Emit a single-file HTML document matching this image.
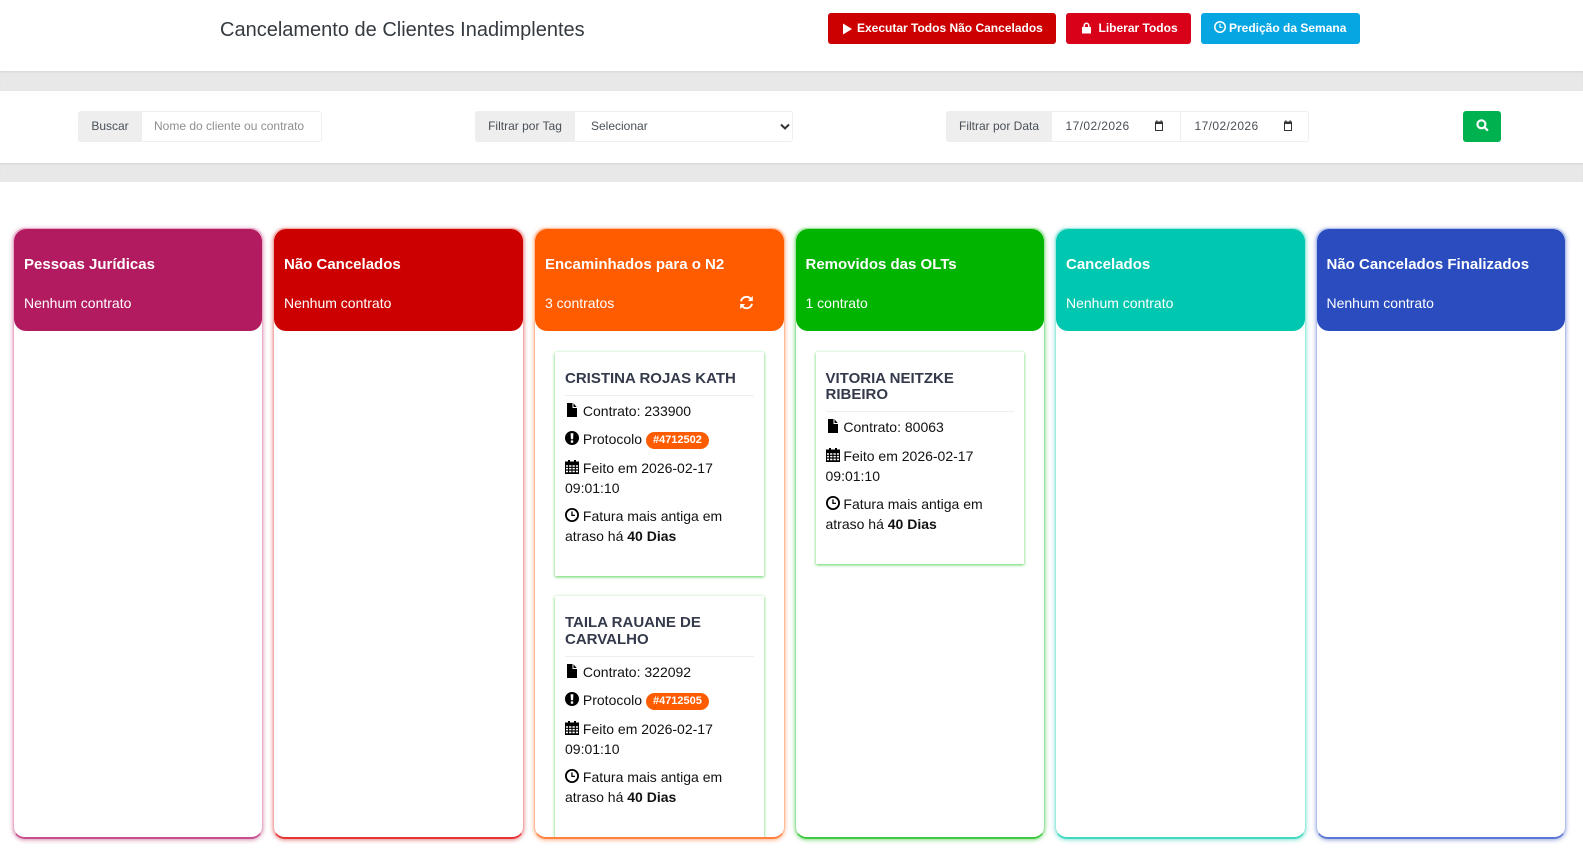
<!DOCTYPE html>
<html lang="pt-BR"><head><meta charset="utf-8"><title>Cancelamento de Clientes Inadimplentes</title>
<style>
*{box-sizing:border-box}
html,body{margin:0;padding:0;width:1583px;height:862px;overflow:hidden;background:#fff;font-family:"Liberation Sans",sans-serif;color:#000}
.abs,.btn,.band,.col,.head,.card,.grp{position:absolute}
.band{left:0;width:1583px;height:20px;background:#e8e8e8;box-shadow:inset 0 2px 2px -1px #d4d4da}
h1{position:absolute;margin:0;left:220px;top:18px;font-size:20px;line-height:24px;font-weight:400;color:#343a40;white-space:nowrap}
.btn{top:13px;height:31px;border-radius:3px;color:#fff;font-weight:700;font-size:12px;line-height:30px;white-space:nowrap}
.btn svg{position:absolute;fill:#fff}
.grp{top:111px;height:31px;border:1px solid #eee;border-radius:3px;font-size:12px;line-height:29px;color:#495057;background:#fff;white-space:nowrap}
.lab{position:absolute;left:-1px;top:-1px;height:31px;line-height:30px;background:#eee;border-radius:3px 0 0 3px;text-align:center;color:#495057}
.t{position:absolute;top:0}
.col{top:228px;width:250.5px;height:611px;background:#fff;border-radius:12px;border:1px solid}
.head{top:229px;width:248.5px;height:102px;border-radius:12px;color:#fff}
.head b{position:absolute;left:10px;top:26.5px;font-size:15px;line-height:18px;white-space:nowrap}
.head span{position:absolute;left:10px;top:66px;font-size:14px;line-height:16px;white-space:nowrap}
.clip{position:absolute;left:535px;top:331px;width:248.5px;height:506px;overflow:hidden}
.card{background:#fff;box-shadow:0 1px 3px rgba(50,200,50,.8);padding:0 10px;overflow:hidden}
.card h5{margin:0;padding:18px 0 0;font-size:15px;line-height:17px;font-weight:700;color:#343a4b}
.card hr{border:0;border-top:1px solid #eee;margin:7.5px 0 0}
.card p{margin:0;position:absolute;left:10px;width:189px;font-size:14px;line-height:20px;color:#111}
.card svg{width:14px;height:14px;vertical-align:-1px;fill:#000}
.tag{display:inline-block;background:#ff5c00;color:#fff;font-size:11px;font-weight:700;border-radius:9px;height:17px;line-height:17px;padding:0;vertical-align:1px;margin-left:0;width:63px;text-align:center}
</style></head><body>
<svg width="0" height="0" style="position:absolute"><defs>
<symbol id="file" viewBox="0 0 14 14"><path d="M2 0H7.5V5H12V14H2ZM8.5 0.3L11.7 4H8.5Z"/></symbol>
<symbol id="exc" viewBox="0 0 14 14"><path fill-rule="evenodd" d="M7 0a7 7 0 1 0 0 14A7 7 0 0 0 7 0ZM5.6 2.3H8.4L8.1 8.3H5.9ZM5.8 9.4H8.2V11.8H5.8Z"/></symbol>
<symbol id="cal" viewBox="0 0 14 14"><path fill-rule="evenodd" d="M3 0H5V1.5H9V0H11V1.5H14V14H0V1.5H3ZM1 5.2V6.7H3V5.2ZM4.1 5.2V6.7H6.4V5.2ZM7.5 5.2V6.7H9.8V5.2ZM10.9 5.2V6.7H13V5.2ZM1 7.9V9.4H3V7.9ZM4.1 7.9V9.4H6.4V7.9ZM7.5 7.9V9.4H9.8V7.9ZM10.9 7.9V9.4H13V7.9ZM1 10.6V12.2H3V10.6ZM4.1 10.6V12.2H6.4V10.6ZM7.5 10.6V12.2H9.8V10.6ZM10.9 10.6V12.2H13V10.6Z"/></symbol>
<symbol id="clk" viewBox="0 0 14 14"><path fill-rule="evenodd" d="M7 0a7 7 0 1 0 0 14A7 7 0 0 0 7 0ZM7 1.8a5.2 5.2 0 1 1 0 10.4A5.2 5.2 0 0 1 7 1.8ZM6.3 3.4H7.6V6.8H10V8H6.3Z"/></symbol>
<symbol id="cico" viewBox="0 0 12 12"><path d="M2 1.5H3.3V.3H4.4V1.5H7.6V.3H8.7V1.5H10V11H2ZM3 4V10H9V4Z" fill="#333"/></symbol>
</defs></svg>

<h1>Cancelamento de Clientes Inadimplentes</h1>
<div class="btn" style="left:828px;width:228px;background:#cc0000"><svg style="left:14px;top:9.5px" width="11" height="12" viewBox="0 0 11 12"><path d="M1 .5 10 6 1 11.5Z"/></svg><span style="position:absolute;left:29px;top:0">Executar Todos Não Cancelados</span></div>
<div class="btn" style="left:1066px;width:125px;background:#d90019"><svg style="left:15px;top:9px" width="11" height="13" viewBox="0 0 11 13"><path fill-rule="evenodd" d="M2.5 5V3.5a3 3 0 0 1 6 0V5H10V11.5H1V5ZM4 5H7V3.5a1.5 1.5 0 0 0-3 0Z"/></svg><span style="position:absolute;left:32.5px;top:0">Liberar Todos</span></div>
<div class="btn" style="left:1201px;width:159px;background:#06a6e3"><svg style="left:12.5px;top:8px" width="12" height="12" viewBox="0 0 14 14"><path fill-rule="evenodd" d="M7 0a7 7 0 1 0 0 14A7 7 0 0 0 7 0ZM7 1.8a5.2 5.2 0 1 1 0 10.4A5.2 5.2 0 0 1 7 1.8ZM6.3 3.4H7.6V6.8H10V8H6.3Z"/></svg><span style="position:absolute;left:28px;top:0">Predição da Semana</span></div>

<div class="band" style="top:71px"></div>

<div class="grp" style="left:78px;width:244px"><div class="lab" style="width:64px">Buscar</div><span class="t" style="left:75px;color:#8f8f8f">Nome do cliente ou contrato</span></div>
<div class="grp" style="left:475px;width:318px"><div class="lab" style="width:100px">Filtrar por Tag</div><span class="t" style="left:115px">Selecionar</span><svg style="position:absolute;left:304px;top:11px" width="10" height="8" viewBox="0 0 10 8"><path d="M1 1.5 5 5.5 9 1.5" fill="none" stroke="#333" stroke-width="2"/></svg></div>
<div class="grp" style="left:946px;width:362.5px"><div class="lab" style="width:106px">Filtrar por Data</div><span class="t" style="left:118.5px;letter-spacing:.4px">17/02/2026</span><svg style="position:absolute;left:206px;top:8px" width="12" height="12"><use href="#cico"/></svg><div style="position:absolute;left:233px;top:0;bottom:0;border-left:1px solid #eee"></div><span class="t" style="left:247.5px;letter-spacing:.4px">17/02/2026</span><svg style="position:absolute;left:335px;top:8px" width="12" height="12"><use href="#cico"/></svg></div>
<div class="btn" style="left:1463px;top:111px;width:38px;height:31px;background:#00b14f"><svg style="left:13px;top:8px" width="13" height="14" viewBox="0 0 12 13"><path d="M5 1.2a3.7 3.7 0 1 1 0 7.4 3.7 3.7 0 0 1 0-7.4ZM7.8 7.6 11 10.8" fill="none" stroke="#fff" stroke-width="2"/></svg></div>

<div class="band" style="top:162.5px;height:19.5px"></div>

<div class="col" style="left:13px;width:250px;border-color:#e9a9c9;border-bottom:2px solid #c74f8d;box-shadow:0 1px 4px rgba(178,28,96,.5)"></div>
<div class="col" style="left:273px;width:251px;border-color:#f5aaaa;border-bottom:2px solid #e73333;box-shadow:0 1px 4px rgba(204,0,0,.5)"></div>
<div class="col" style="left:534px;border-color:#ffbb99;border-bottom:2px solid #ff8040;box-shadow:0 1px 4px rgba(255,92,0,.5)"></div>
<div class="col" style="left:794.5px;border-color:#9de39d;border-bottom:2px solid #40c840;box-shadow:0 1px 4px rgba(0,180,0,.5)"></div>
<div class="col" style="left:1055px;border-color:#9de9dd;border-bottom:2px solid #40d8c0;box-shadow:0 1px 4px rgba(0,200,175,.5)"></div>
<div class="col" style="left:1315.5px;border-color:#b3c1ec;border-bottom:2px solid #5c78d6;box-shadow:0 1px 4px rgba(42,76,190,.5)"></div>

<div class="head" style="left:14px;width:248px;background:#b21b60"><b>Pessoas Jurídicas</b><span>Nenhum contrato</span></div>
<div class="head" style="left:274px;width:249px;background:#cc0000"><b>Não Cancelados</b><span>Nenhum contrato</span></div>
<div class="head" style="left:535px;background:#ff5c00"><b>Encaminhados para o N2</b><span>3 contratos</span>
<svg style="position:absolute;left:203.5px;top:65.5px" width="15" height="15" viewBox="0 0 15 15"><path d="M2 6.2A5.6 5.6 0 0 1 12 4.2M13 8.8A5.6 5.6 0 0 1 3 10.8" fill="none" stroke="#fff" stroke-width="1.9"/><path d="M13.8 1V6H8.8ZM1.2 14V9H6.2Z" fill="#fff"/></svg></div>
<div class="head" style="left:795.5px;background:#00b400"><b>Removidos das OLTs</b><span>1 contrato</span></div>
<div class="head" style="left:1056px;background:#00c7af"><b>Cancelados</b><span>Nenhum contrato</span></div>
<div class="head" style="left:1316.5px;background:#2a4cbe"><b>Não Cancelados Finalizados</b><span>Nenhum contrato</span></div>

<div class="clip">
<div class="card" style="left:20px;top:21px;width:209px;height:224px"><h5>CRISTINA ROJAS KATH</h5><hr>
<p style="top:49px"><svg><use href="#file"/></svg> Contrato: 233900</p>
<p style="top:77px"><svg><use href="#exc"/></svg> Protocolo <span class="tag">#4712502</span></p>
<p style="top:106px"><svg><use href="#cal"/></svg> Feito em 2026-02-17 09:01:10</p>
<p style="top:154px"><svg><use href="#clk"/></svg> Fatura mais antiga em atraso há <b>40 Dias</b></p></div>
<div class="card" style="left:20px;top:265px;width:209px;height:262px"><h5>TAILA RAUANE DE CARVALHO</h5><hr>
<p style="top:66px"><svg><use href="#file"/></svg> Contrato: 322092</p>
<p style="top:94px"><svg><use href="#exc"/></svg> Protocolo <span class="tag">#4712505</span></p>
<p style="top:123px"><svg><use href="#cal"/></svg> Feito em 2026-02-17 09:01:10</p>
<p style="top:171px"><svg><use href="#clk"/></svg> Fatura mais antiga em atraso há <b>40 Dias</b></p></div>
</div>

<div class="card" style="left:815.5px;top:352px;width:208.5px;height:211.5px"><h5 style="padding-top:19px;line-height:16px">VITORIA NEITZKE RIBEIRO</h5><hr>
<p style="top:65px"><svg><use href="#file"/></svg> Contrato: 80063</p>
<p style="top:94px"><svg><use href="#cal"/></svg> Feito em 2026-02-17 09:01:10</p>
<p style="top:142px"><svg><use href="#clk"/></svg> Fatura mais antiga em atraso há <b>40 Dias</b></p></div>
</body></html>
